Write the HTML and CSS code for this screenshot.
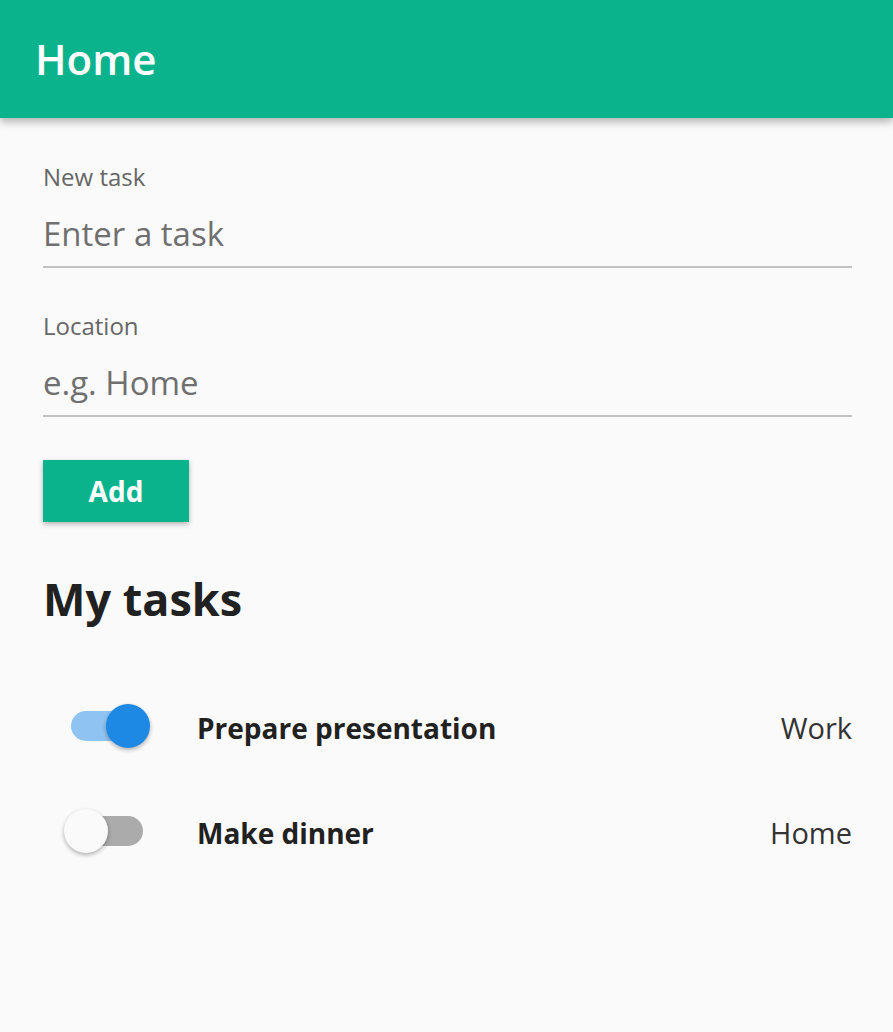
FILE: index.html
```html
<!DOCTYPE html>
<html lang="en">
<head>
<meta charset="utf-8">
<title>Home</title>
<link rel="stylesheet" href="styles.css">
</head>
<body>
<header class="appbar"><h1 class="appbar-title">Home</h1></header>
<main class="content">
  <div class="field">
    <div class="field-label">New task</div>
    <div class="field-input">Enter a task</div>
  </div>
  <div class="field field-second">
    <div class="field-label">Location</div>
    <div class="field-input">e.g. Home</div>
  </div>
  <button class="btn-add">Add</button>
  <h2 class="section-title">My tasks</h2>
  <ul class="tasks">
    <li class="task">
      <div class="switch switch-on"><span class="track"></span><span class="knob"></span></div>
      <span class="task-name">Prepare presentation</span>
      <span class="task-loc">Work</span>
    </li>
    <li class="task">
      <div class="switch switch-off"><span class="track"></span><span class="knob"></span></div>
      <span class="task-name">Make dinner</span>
      <span class="task-loc">Home</span>
    </li>
  </ul>
</main>
</body>
</html>
```
FILE: styles.css
```css
* { box-sizing: border-box; }
html, body { margin: 0; padding: 0; }
body {
  background: #fafafa;
  font-family: "Open Sans", "Noto Sans", sans-serif;
  color: #212121;
  width: 893px;
  min-height: 1032px;
  overflow: hidden;
}
.appbar {
  height: 118px;
  background: #0bb38d;
  display: flex;
  align-items: center;
  padding-left: 35px;
  box-shadow: 0 4px 8px rgba(0,0,0,0.28);
  position: relative;
  z-index: 1;
}
.appbar-title {
  margin: 0;
  color: #fff;
  font-size: 42px;
  font-weight: 600;
  line-height: 50px;
}
.content {
  display: flex;
  flex-direction: column;
  align-items: flex-start;
  padding: 44px 41px 0 43px;
}
.field {
  align-self: stretch;
  display: flex;
  flex-direction: column;
  border-bottom: 2px solid #c2c2c2;
  padding-bottom: 10px;
}
.field-second { margin-top: 43px; }
.field-label {
  font-size: 24px;
  line-height: 30px;
  color: #666;
}
.field-input {
  margin-top: 20px;
  font-size: 33px;
  line-height: 44px;
  color: #6f6f6f;
}
.btn-add {
  margin-top: 43px;
  width: 146px;
  height: 62px;
  border: none;
  background: #0bb38d;
  color: #fff;
  font-family: inherit;
  font-size: 28px;
  font-weight: 700;
  box-shadow: 0 2px 5px rgba(0,0,0,0.3);
  padding: 0;
}
.section-title {
  margin: 47px 0 0 0;
  font-size: 45px;
  font-weight: 700;
  line-height: 60px;
  color: #212121;
}
.tasks {
  list-style: none;
  margin: 46px 0 0 0;
  padding: 0;
  align-self: stretch;
}
.task {
  height: 105px;
  display: flex;
  align-items: center;
}
.switch {
  position: relative;
  width: 86px;
  height: 44px;
  margin-left: 21px;
  margin-top: -4px;
  flex: none;
}
.track {
  position: absolute;
  left: 7px;
  top: 7px;
  width: 72px;
  height: 30px;
  border-radius: 15px;
}
.knob {
  position: absolute;
  top: 0;
  width: 44px;
  height: 44px;
  border-radius: 50%;
  box-shadow: 0 2px 4px rgba(0,0,0,0.3);
}
.switch-on .track { background: #8fc3f2; }
.switch-on .knob { right: 0; background: #1e88e5; }
.switch-off .track { background: #ababab; }
.switch-off .knob { left: 0; background: #fafafa; }
.task-name {
  margin-left: 47px;
  font-size: 28px;
  font-weight: 700;
  color: #212121;
  flex: 1;
}
.task-loc {
  font-size: 29px;
  color: #333;
}
```
